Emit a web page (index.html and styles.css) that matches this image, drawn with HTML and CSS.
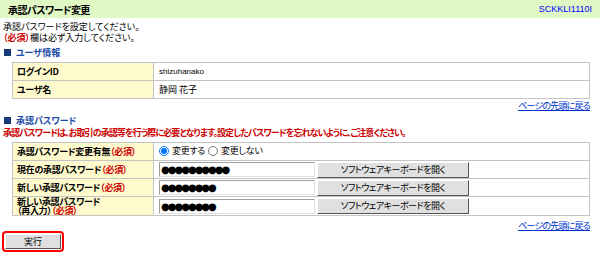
FILE: index.html
```html
<!DOCTYPE html>
<html lang="ja">
<head>
    <meta charset="UTF-8">
    <title>承認パスワード変更</title>
    <link rel="stylesheet" href="styles.css">
</head>
<body>
    <div class="page-head">
        <h1 class="page-title">承認パスワード変更</h1>
        <span class="screen-id">SCKKLI1110I</span>
    </div>

    <div class="intro">
        <p>承認パスワードを設定してください。</p>
        <p><span class="required">（必須）</span>欄は必ず入力してください。</p>
    </div>

    <h2 class="section-title"><span class="section-mark"></span>ユーザ情報</h2>
    <table class="form-table">
        <tr>
            <th>ログインID</th>
            <td class="small">shizuhanako</td>
        </tr>
        <tr>
            <th>ユーザ名</th>
            <td>静岡 花子</td>
        </tr>
    </table>
    <div class="to-top"><a href="#">ページの先頭に戻る</a></div>

    <h2 class="section-title"><span class="section-mark"></span>承認パスワード</h2>
    <p class="notice">承認パスワードは、お取引の承認等を行う際に必要となります。設定したパスワードを忘れないように、ご注意ください。</p>
    <table class="form-table">
        <tr>
            <th>承認パスワード変更有無<span class="required">（必須）</span></th>
            <td>
                <label class="radio"><input type="radio" name="change" checked> 変更する</label>
                <label class="radio"><input type="radio" name="change"> 変更しない</label>
            </td>
        </tr>
        <tr>
            <th>現在の承認パスワード<span class="required">（必須）</span></th>
            <td>
                <div class="pw-row">
                    <input class="pw-input" type="text" value="●●●●●●●●●●" readonly>
                    <button class="soft-key" type="button">ソフトウェアキーボードを開く</button>
                </div>
            </td>
        </tr>
        <tr>
            <th>新しい承認パスワード<span class="required">（必須）</span></th>
            <td>
                <div class="pw-row">
                    <input class="pw-input" type="text" value="●●●●●●●●" readonly>
                    <button class="soft-key" type="button">ソフトウェアキーボードを開く</button>
                </div>
            </td>
        </tr>
        <tr>
            <th class="two-line">新しい承認パスワード<br>（再入力）<span class="required">（必須）</span></th>
            <td>
                <div class="pw-row">
                    <input class="pw-input" type="text" value="●●●●●●●●" readonly>
                    <button class="soft-key" type="button">ソフトウェアキーボードを開く</button>
                </div>
            </td>
        </tr>
    </table>
    <div class="to-top to-top-last"><a href="#">ページの先頭に戻る</a></div>

    <div class="actions">
        <span class="focus-ring"><button class="submit" type="button">実行</button></span>
    </div>
</body>
</html>
```

FILE: styles.css
```css
* {
    font-family: "Noto Sans CJK JP", "Noto Sans", sans-serif;
    font-feature-settings: "palt";
    box-sizing: border-box;
}

body {
    margin: 0;
    width: 600px;
    font-size: 9px;
    line-height: 11px;
    color: #000;
    background: #fff;
}

p {
    margin: 0;
}

.page-head {
    display: flex;
    justify-content: space-between;
    align-items: center;
    height: 18px;
    padding: 0 8px 0 8px;
    background: #e0f8c4;
}

.page-title {
    margin: 0;
    font-size: 10px;
    font-weight: 700;
    letter-spacing: -0.6px;
}

.screen-id {
    font-family: "Liberation Sans", sans-serif;
    font-size: 9px;
    color: #0000ff;
}

.intro {
    padding: 3px 3px 0 3px;
}

.intro .required {
    font-weight: 700;
}

.required {
    color: #cc0000;
}

.section-title {
    display: flex;
    align-items: center;
    gap: 5px;
    height: 11px;
    margin: 4px 0 0 4px;
    font-size: 9px;
    font-weight: 700;
    color: #1a4ca6;
}

.section-mark {
    width: 7px;
    height: 7px;
    background: #143a78;
}

.notice {
    margin: 1px 0 0 3px;
    color: #cc0000;
    font-weight: 700;
    letter-spacing: -0.9px;
}

.form-table {
    width: 578px;
    margin: 4px 0 0 12px;
    border-collapse: collapse;
}

.form-table th,
.form-table td {
    height: 18px;
    padding: 0 4px;
    border: 1px solid #c4c4c4;
    text-align: left;
    vertical-align: middle;
    white-space: nowrap;
}

.form-table td {
    padding-left: 5px;
}

.form-table th {
    width: 141px;
    background: #fffacd;
    font-weight: 700;
    letter-spacing: -0.3px;
}

.form-table th.two-line {
    height: 19px;
    line-height: 9px;
}

.form-table td.small {
    font-family: "Liberation Sans", sans-serif;
    font-size: 8px;
}

.radio {
    display: inline-flex;
    align-items: center;
    gap: 3px;
    margin-right: 1px;
    letter-spacing: -0.3px;
}

.radio input {
    width: 10px;
    height: 10px;
    margin: 0;
}

.pw-row {
    display: flex;
    align-items: center;
    gap: 2px;
}

.pw-input {
    width: 156px;
    height: 15px;
    margin: 0;
    padding: 0 1px;
    border: 1px solid #a0a0a0;
    border-bottom-color: #e0e0e0;
    border-right-color: #e0e0e0;
    font-family: "DejaVu Sans", sans-serif;
    font-feature-settings: normal;
    font-size: 10px;
    letter-spacing: -2px;
    color: #000;
}

.soft-key,
.submit {
    height: 16px;
    margin: 0;
    padding: 0;
    background: #e0e0e0;
    border: 1px solid #ffffff;
    border-right-color: #555;
    border-bottom-color: #555;
    font-size: 9px;
    line-height: 10px;
    color: #000;
}

.soft-key {
    width: 152px;
    letter-spacing: -0.5px;
}

.to-top {
    width: 590px;
    height: 11px;
    margin-top: 1px;
    text-align: right;
}

.to-top-last {
    margin-top: 4px;
}

.to-top a {
    color: #0033cc;
    font-size: 9px;
    letter-spacing: -0.8px;
}

.actions {
    margin: 0 0 0 2px;
}

.focus-ring {
    display: inline-block;
    padding: 1px;
    border: 2px solid #ff0000;
    border-radius: 4px;
}

.submit {
    display: block;
    width: 56px;
    height: 15px;
}
```
